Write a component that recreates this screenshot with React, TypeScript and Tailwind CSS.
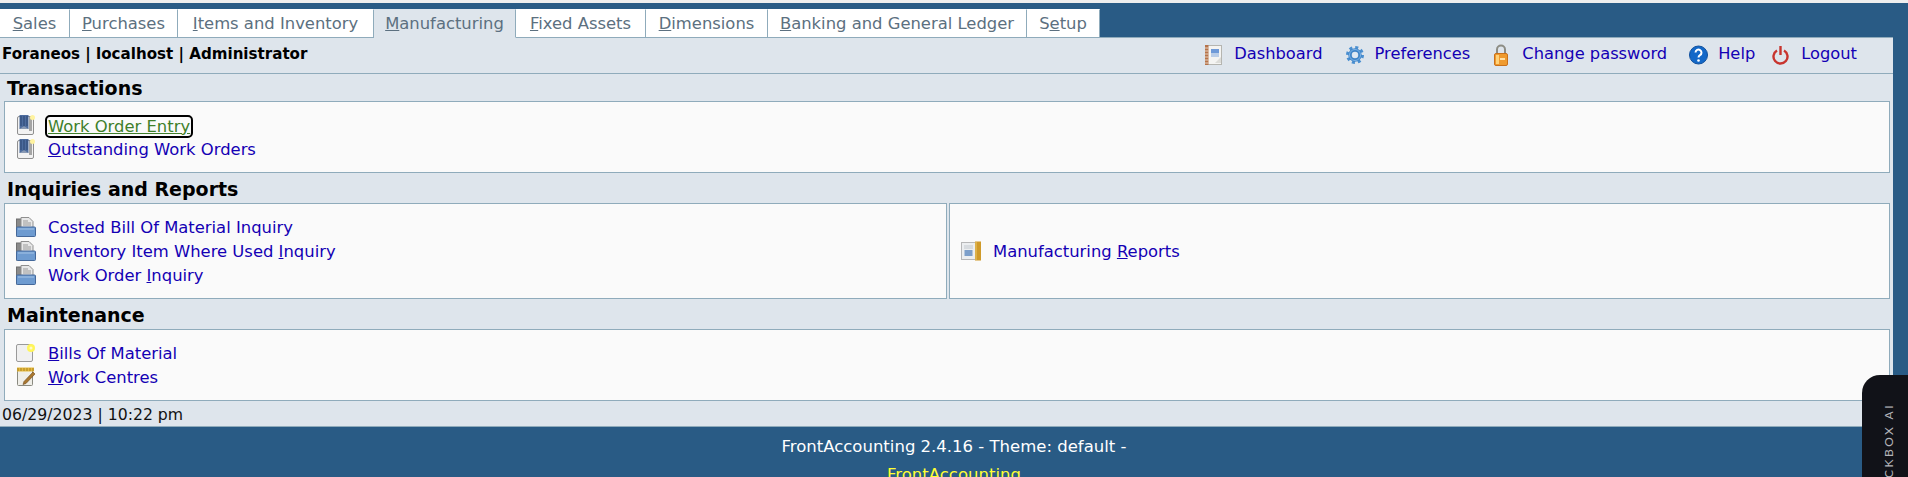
import React from "react";

const U = ({ children }: { children: React.ReactNode }) => <span className="underline">{children}</span>;

const Book = () => (
  <svg width="20" height="20" viewBox="0 0 20 20" className="shrink-0">
    <rect x="1.500" y="1.500" width="16" height="18" rx="1.500" fill="#f2f2f2" stroke="#8f8f8f" />
    <rect x="3.500" y="0" width="9" height="14" fill="#4d6c9e" />
    <path d="M5 1v10M8 1v12M11 1v10" stroke="#2c4672" />
    <path d="M3.500 14h9l-4.500-3z" fill="#8a9ab4" />
    <rect x="13" y="2" width="3" height="14" fill="#a5a5a5" />
    <circle cx="16.500" cy="2.500" r="2.500" fill="#fff3a0" />
  </svg>
);

const Folder = () => (
  <svg width="20" height="20" viewBox="0 0 20 20" className="shrink-0">
    <rect x="0.500" y="2" width="8" height="17" fill="#8a8a8a" stroke="#6f6f6f" />
    <path d="M5 0.500h8l4 4v6H5z" fill="#e8e8e8" stroke="#8f8f8f" />
    <path d="M7 4h5M7 6h8M7 8h8" stroke="#9a9a9a" />
    <rect x="0.500" y="10" width="19" height="9.500" rx="1" fill="#6e9bd0" stroke="#44689a" />
    <path d="M2 12h16" stroke="#a5c4e6" />
  </svg>
);

const Note = () => (
  <svg width="20" height="20" viewBox="0 0 20 20" className="shrink-0">
    <rect x="0.500" y="1.500" width="16" height="17" rx="1.500" fill="#f0f0f0" stroke="#9a9a9a" />
    <circle cx="15" cy="5" r="4" fill="#fff65a" />
    <circle cx="15" cy="5" r="1.500" fill="#fffbc8" />
  </svg>
);

const Pad = () => (
  <svg width="20" height="20" viewBox="0 0 20 20" className="shrink-0">
    <rect x="1.500" y="2.500" width="15" height="16" rx="1" fill="#efeee8" stroke="#8a8a80" />
    <rect x="1" y="0.500" width="17" height="4" fill="#e6b93e" />
    <path d="M2 1v3M5 1v3M8 1v3M11 1v3M14 1v3M17 1v3" stroke="#a88320" />
    <path d="M8 14.500 17 5l2 2-9 9.500-3 1z" fill="#a9772f" stroke="#6f4a1c" strokeWidth="0.600" />
  </svg>
);

const Report = () => (
  <svg width="20" height="20" viewBox="0 0 20 20" className="shrink-0">
    <rect x="0.500" y="1.500" width="14" height="17" fill="#eceef0" stroke="#7a7a7a" strokeDasharray="1 1" />
    <path d="M3 5h9M3 7h9" stroke="#c2c8ce" />
    <rect x="3.500" y="9" width="8" height="6" fill="#7d9fca" />
    <rect x="14" y="0.500" width="6" height="19" fill="#cf9a2a" />
    <path d="M15 1v18" stroke="#e9c66a" />
  </svg>
);

const DashIcon = () => (
  <svg width="18" height="22" viewBox="0 0 18 22" className="shrink-0">
    <rect x="0.500" y="1.500" width="16" height="19" fill="#f4f4f2" stroke="#b5b5b0" />
    <rect x="0" y="1" width="3.500" height="20" fill="#b5734a" />
    <path d="M0 4h3.500M0 7h3.500M0 10h3.500M0 13h3.500M0 16h3.500M0 19h3.500" stroke="#e7d2bf" />
    <rect x="6" y="5" width="8" height="4" fill="#6f9ad8" />
    <rect x="6" y="9" width="8" height="4" fill="#b9cde8" />
    <path d="M10 19l6-6v6z" fill="#dcdcd8" />
  </svg>
);

const GearIcon = () => (
  <svg width="18" height="20" viewBox="0 0 18 20" className="shrink-0">
    <circle cx="9" cy="10" r="7.500" fill="none" stroke="#4a8fd0" strokeWidth="3" strokeDasharray="3 2.890" />
    <circle cx="9" cy="10" r="5" fill="none" stroke="#3f84c8" strokeWidth="3.500" />
    <circle cx="9" cy="10" r="5.500" fill="none" stroke="#7db4e6" strokeWidth="1" />
    <circle cx="9" cy="10" r="2.500" fill="#dfeaf5" />
  </svg>
);

const LockIcon = () => (
  <svg width="16" height="22" viewBox="0 0 16 22" className="shrink-0">
    <path d="M4 10V5.500a4 4 0 0 1 8 0V10" fill="none" stroke="#8d8d85" strokeWidth="2" />
    <rect x="1.500" y="9.500" width="13" height="12" rx="1.500" fill="#ef9a2e" stroke="#c9701a" />
    <rect x="3" y="11" width="3" height="9" fill="#ffd27a" />
    <rect x="7" y="14" width="5" height="2" fill="#ffe1a8" />
  </svg>
);

const HelpIcon = () => (
  <svg width="19" height="20" viewBox="0 0 19 20" className="shrink-0">
    <circle cx="9.500" cy="10" r="9" fill="#1368c8" stroke="#0f4f9c" />
    <path d="M6.500 7.500a3 3 0 1 1 4.500 2.700c-1 .6-1.500 1-1.500 2.300" fill="none" stroke="#fff" strokeWidth="2" />
    <circle cx="9.500" cy="15.500" r="1.300" fill="#fff" />
  </svg>
);

const PowerIcon = () => (
  <svg width="17" height="20" viewBox="0 0 17 20" className="shrink-0">
    <path d="M5 5.500a7 7 0 1 0 7 0" fill="none" stroke="#c8342e" strokeWidth="2.400" />
    <path d="M8.500 1v9" stroke="#c8342e" strokeWidth="2.400" />
  </svg>
);

const tabs: { key: string; node: React.ReactNode; active?: boolean; w: string }[] = [
  { key: "sales", w: "w-[70px]", node: <><U>S</U>ales</> },
  { key: "purchases", w: "w-[108px]", node: <><U>P</U>urchases</> },
  { key: "items", w: "w-[196px]", node: <><U>I</U>tems and Inventory</> },
  { key: "mfg", w: "w-[142px]", active: true, node: <><U>M</U>anufacturing</> },
  { key: "fixed", w: "w-[130px]", node: <><U>F</U>ixed Assets</> },
  { key: "dim", w: "w-[122px]", node: <><U>D</U>imensions</> },
  { key: "bank", w: "w-[259px]", node: <><U>B</U>anking and General Ledger</> },
  { key: "setup", w: "w-[73px]", node: <>S<U>e</U>tup</> },
];

const Row = ({ icon, children, green }: { icon: React.ReactNode; children: React.ReactNode; green?: boolean }) => (
  <div className="flex h-6 items-center">
    <span className="flex w-[32px] shrink-0 items-center">{icon}</span>
    <span className={green ? "-ml-px mt-[2px] rounded-[3px] px-px leading-[19px] text-[#3f7f2a] underline outline-2 outline-black" : "mt-[2px] text-[#1400b4]"}>{children}</span>
  </div>
);

const Box = ({ children, className }: { children: React.ReactNode; className?: string }) => (
  <div className={`flex flex-col justify-center border border-[#8fabbb] bg-[#fafafa] pl-[11px] ${className ?? ""}`}>{children}</div>
);

const Title = ({ children, className }: { children: React.ReactNode; className: string }) => (
  <h2 className={`pl-[3px] text-[19px] leading-[22px] font-bold text-black ${className}`}>{children}</h2>
);

const TopLink = ({ icon, label, gap, ml }: { icon: React.ReactNode; label: string; gap: string; ml: string }) => (
  <span className={`flex items-center ${gap} ${ml}`}>
    {icon}
    <span>{label}</span>
  </span>
);

export default function App() {
  return (
    <div className="relative h-[477px] w-[1908px] overflow-hidden bg-[#eeeeee] font-['DejaVu_Sans',Verdana,sans-serif] text-[16.4px]">
      <div className="mt-[3px] h-[474px] bg-[#295b85] pr-[15px]">
        <div className="flex h-[34px] items-end pt-[7px]">
          {tabs.map((t) => (
            <div
              key={t.key}
              className={`relative z-10 -mb-px flex h-[29px] items-center justify-center border border-l-0 pt-[2px] ${t.w} ${
                t.active
                  ? "border-[#dee5ec] border-r-[#8fabbb] bg-[#dee5ec] text-[#5c7080]"
                  : "border-[#8fabbb] border-t-white bg-white text-[#5c7080]"
              }`}
            >
              <span>{t.node}</span>
            </div>
          ))}
        </div>
        <div className="border-t border-[#8fabbb] bg-[#dee5ec]">
          <div className="flex h-[36px] items-center justify-between border-b border-[#8fabbb] pl-[2px] pr-[36px]">
            <span className="mb-[3px] text-[15.1px] font-bold text-black">Foraneos | localhost | Administrator</span>
            <div className="mb-[2px] flex items-center text-[16.3px] text-[#1400b4]">
              <TopLink icon={<DashIcon />} label="Dashboard" gap="gap-[11px]" ml="" />
              <TopLink icon={<GearIcon />} label="Preferences" gap="gap-[11px]" ml="ml-[23px]" />
              <TopLink icon={<LockIcon />} label="Change password" gap="gap-[13px]" ml="ml-[23px]" />
              <TopLink icon={<HelpIcon />} label="Help" gap="gap-[10px]" ml="ml-[22px]" />
              <TopLink icon={<PowerIcon />} label="Logout" gap="gap-[12px]" ml="ml-[17px]" />
            </div>
          </div>
          <div className="pl-[4px] pr-[3px]">
            <Title className="pt-[3px] pb-[2px]">Transactions</Title>
            <Box className="h-[72px]">
              <Row icon={<Book />} green>
                Work Order Entry
              </Row>
              <Row icon={<Book />}>
                <U>O</U>utstanding Work Orders
              </Row>
            </Box>
            <Title className="pt-[5px] pb-[3px]">Inquiries and Reports</Title>
            <div className="flex gap-[2px]">
              <Box className="h-[96px] w-[943px]">
                <Row icon={<Folder />}>Costed Bill Of Material Inquiry</Row>
                <Row icon={<Folder />}>
                  Inventory Item Where Used <U>I</U>nquiry
                </Row>
                <Row icon={<Folder />}>
                  Work Order <U>I</U>nquiry
                </Row>
              </Box>
              <Box className="h-[96px] flex-1">
                <Row icon={<Report />}>
                  Manufacturing <U>R</U>eports
                </Row>
              </Box>
            </div>
            <Title className="pt-[5px] pb-[3px]">Maintenance</Title>
            <Box className="h-[72px]">
              <Row icon={<Note />}>
                <U>B</U>ills Of Material
              </Row>
              <Row icon={<Pad />}>
                <U>W</U>ork Centres
              </Row>
            </Box>
          </div>
          <div className="flex h-[26px] items-center border-b border-[#8fabbb] pl-[2px] pt-[2px] text-[15.7px] text-[#111]">06/29/2023 | 10:22 pm</div>
        </div>
        <div className="-mr-[15px] flex flex-col items-center pt-[8px] text-[16.5px] text-white">
          <span className="h-[28px] leading-[24px]">FrontAccounting 2.4.16 - Theme: default -</span>
          <span className="leading-[24px] text-[#ffff33]">FrontAccounting</span>
        </div>
      </div>
      <div className="absolute top-[375px] right-0 h-[120px] w-[46px] overflow-hidden rounded-tl-[18px] bg-[#111218]">
        <span className="absolute top-[28px] left-[18px] rotate-180 whitespace-nowrap font-['Lato',sans-serif] text-[12px] tracking-[2.5px] text-[#b4b4b8] [writing-mode:vertical-rl]">
          BLACKBOX AI
        </span>
      </div>
    </div>
  );
}
